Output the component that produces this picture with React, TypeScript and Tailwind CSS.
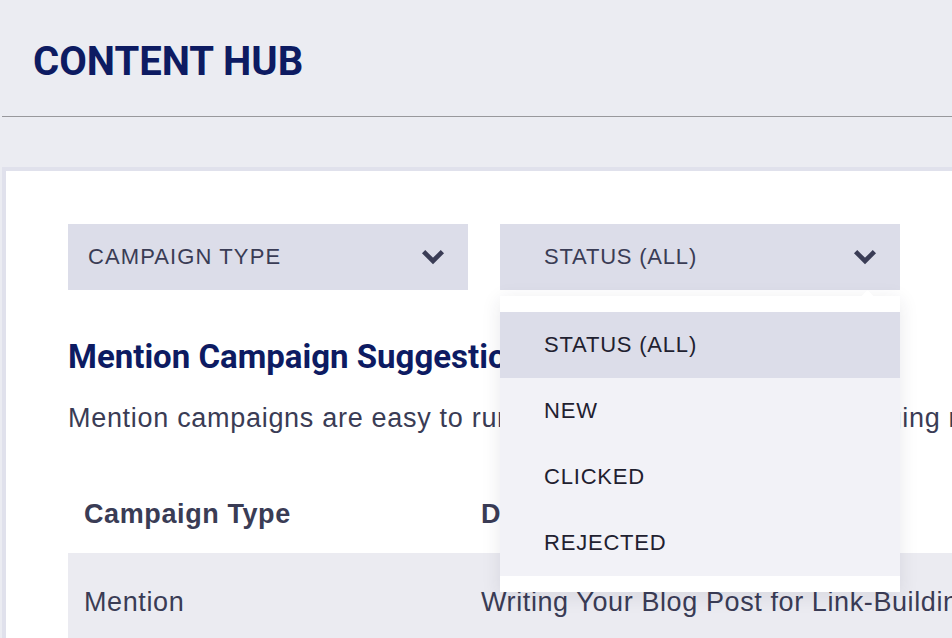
import React from "react";

const statuses = ["STATUS (ALL)", "NEW", "CLICKED", "REJECTED"];

function Chevron() {
  return (
    <svg width="24" height="16" viewBox="0 0 24 16" fill="none" className="shrink-0">
      <path d="M2.6 2.6 L12 12 L21.4 2.6" stroke="#3a3c55" strokeWidth="4.6" strokeLinejoin="miter" />
    </svg>
  );
}

export default function App() {
  return (
    <div className="h-screen w-full overflow-hidden bg-[#ebecf2] font-['Liberation_Sans',Arial,sans-serif] text-[#3a3c55]">
      <div className="ml-[2px] border-b-[1.5px] border-[#98989c] pb-[34px] pt-[42px] pl-[31px]">
        <h1 className="font-['Roboto',sans-serif] text-[40px] font-bold leading-none text-[#0d1b62]">
          CONTENT HUB
        </h1>
      </div>

      <div className="ml-[2px] mt-[50px] w-[1300px] border-l-4 border-t-4 border-[#e0e1ec] bg-white pl-[62px] pt-[53px]">
        <div className="flex gap-8">
          <div className="flex h-[66px] w-[400px] items-center justify-between bg-[#dcdde9] pl-5 pr-[23px]">
            <span className="text-[22px] leading-none tracking-[1.1px]">CAMPAIGN TYPE</span>
            <Chevron />
          </div>
          <div className="relative">
            <div className="flex h-[66px] w-[400px] items-center justify-between bg-[#dcdde9] pl-[44px] pr-[23px]">
              <span className="text-[22px] leading-none tracking-[0.8px]">STATUS (ALL)</span>
              <Chevron />
            </div>
            <div className="absolute left-0 top-[72px] z-10 w-[400px] bg-white py-4 shadow-[0_4px_18px_rgba(40,42,70,0.10)]">
              <div className="absolute -top-[4px] right-[28px] h-[9px] w-[9px] rotate-45 rounded-[1px] bg-white" />
              {statuses.map((s, i) => (
                <div
                  key={s}
                  className={
                    i === 0
                      ? "flex h-[66px] items-center bg-[#dcdde9] pl-[44px] text-[22px] leading-none tracking-[0.8px] text-[#1f2130]"
                      : "flex h-[66px] items-center bg-[#f2f2f7] pl-[44px] text-[22px] leading-none tracking-[0.8px] text-[#1f2130]"
                  }
                >
                  {s}
                </div>
              ))}
            </div>
          </div>
        </div>

        <h2 className="mt-[50px] font-['Roboto',sans-serif] text-[33px] font-bold leading-none text-[#0d1b62]">
          Mention Campaign Suggestions
        </h2>
        <p className="mt-8 whitespace-nowrap text-[27px] leading-none tracking-[0.7px]">
          Mention campaigns are easy to run because they're about leveraging relationships and existing mentions of your brand.
        </p>

        <div className="mt-[69px] grid grid-cols-[397px_1fr] pb-[25px] text-[27px] font-bold leading-none tracking-[0.6px]">
          <div className="px-4">Campaign Type</div>
          <div className="px-4">Description</div>
        </div>
        <div className="grid h-[100px] grid-cols-[397px_1fr] bg-[#ebebf1] pt-[36px] text-[27px] leading-none tracking-[0.6px]">
          <div className="px-4">Mention</div>
          <div className="whitespace-nowrap px-4">Writing Your Blog Post for Link-Building Success</div>
        </div>
      </div>
    </div>
  );
}
